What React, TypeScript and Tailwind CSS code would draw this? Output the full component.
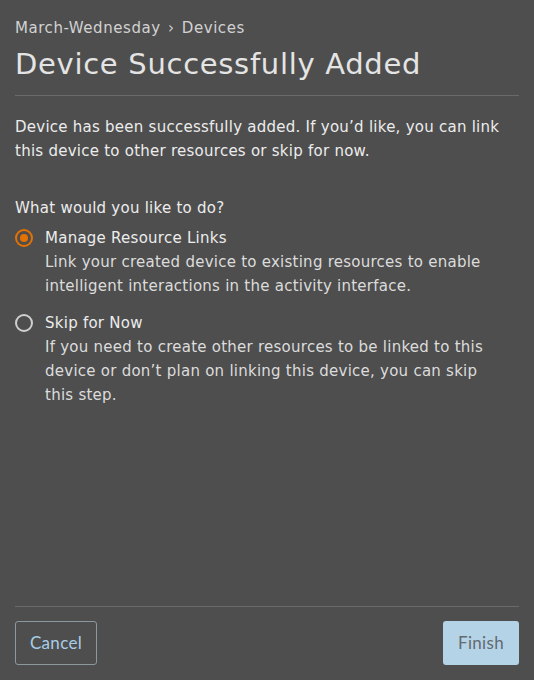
import React from "react";

export default function App() {
  const font = { fontFamily: "'DejaVu Sans', sans-serif" };
  const btn = { fontFamily: "Lato, sans-serif" };
  return (
    <div className="h-[680px] w-[534px] bg-[#4e4e4e] flex flex-col px-[15px]" style={font}>
      <div className="pt-[18px]">
        <div className="text-[15px] leading-[20px] tracking-[0.55px] text-[#d2d2d2]">
          March-Wednesday <span className="mx-[2px]">›</span> Devices
        </div>
        <h1 className="mt-[8px] text-[29px] leading-[36px] tracking-[0.7px] text-[#e4e4e4] font-normal">
          Device Successfully Added
        </h1>
        <div className="mt-[13px] border-t border-[#6a6a6a]" />
      </div>
      <div className="flex-1 pr-[12px] text-[15px] leading-[24px] tracking-[0.25px] text-[#ececec]">
        <p className="mt-[19px]">
          Device has been successfully added. If you’d like, you can link this device to other resources or skip for now.
        </p>
        <p className="mt-[33px]">What would you like to do?</p>
        <div className="mt-[6px] flex">
          <div className="w-[30px] shrink-0 pt-[3px]">
            <div className="w-[18px] h-[18px] rounded-full border-2 border-[#e57200] flex items-center justify-center">
              <div className="w-[8px] h-[8px] rounded-full bg-[#e57200]" />
            </div>
          </div>
          <div>
            <div>Manage Resource Links</div>
            <div className="text-[#dcdcdc]">
              Link your created device to existing resources to enable intelligent interactions in the activity interface.
            </div>
          </div>
        </div>
        <div className="mt-[13px] flex">
          <div className="w-[30px] shrink-0 pt-[3px]">
            <div className="w-[18px] h-[18px] rounded-full border-2 border-[#cfcfcf]" />
          </div>
          <div>
            <div>Skip for Now</div>
            <div className="text-[#dcdcdc]">
              If you need to create other resources to be linked to this device or don’t plan on linking this device, you can skip this step.
            </div>
          </div>
        </div>
      </div>
      <div className="border-t border-[#6a6a6a] pt-[14px] pb-[15px] flex justify-between" style={btn}>
        <button className="h-[44px] w-[82px] rounded-[3px] border border-[#8d979e] text-[#a9cde6] text-[17px] tracking-[0.3px]">
          Cancel
        </button>
        <button className="h-[44px] w-[76px] rounded-[3px] bg-[#b4d3e7] text-[#636a70] text-[17px] tracking-[0.3px]">
          Finish
        </button>
      </div>
    </div>
  );
}
